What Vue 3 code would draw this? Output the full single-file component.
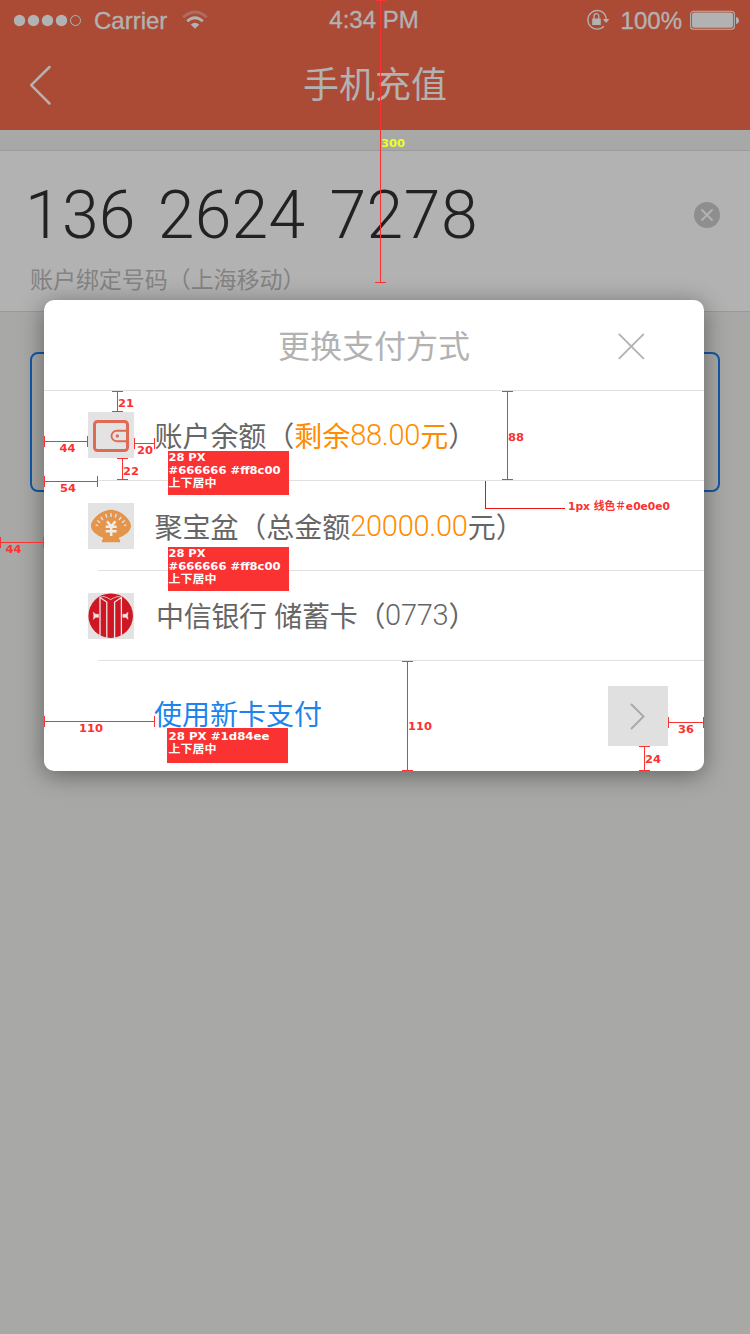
<script setup>
const rows = [
  { id: 'balance', parts: [{ t: '账户余额（' }, { t: '剩余', hot: true }, { t: '88.00', hot: true, num: true }, { t: '元', hot: true }, { t: '）' }] },
  { id: 'fund', parts: [{ t: '聚宝盆（总金额' }, { t: '20000.00', hot: true, num: true }, { t: '元）' }] },
  { id: 'bank', parts: [{ t: '中信银行 储蓄卡（' }, { t: '0773', num: true }, { t: '）' }] },
]

// Horizontal spans: x1, x2, y
const hSpans = [
  [44, 87, 441], [134, 154, 443], [44, 97, 481], [0, 43, 542], [44, 154, 721], [668, 703, 722],
]
// Vertical spans: x, y1, y2
const vSpans = [
  [380, 0, 282], [117, 391, 411], [122, 458, 479], [507, 391, 479], [407, 661, 770], [644, 746, 770],
]
const labels = [
  { x: 381, y: 147, t: '300', w: 24, c: '#e8ff28' },
  { x: 118, y: 407, t: '21', w: 16 },
  { x: 59.5, y: 452, t: '44', w: 16 },
  { x: 137, y: 454, t: '20', w: 16 },
  { x: 123, y: 475, t: '22', w: 16 },
  { x: 60, y: 492, t: '54', w: 16 },
  { x: 5.5, y: 553, t: '44', w: 16 },
  { x: 508, y: 441, t: '88', w: 16 },
  { x: 79, y: 732, t: '110', w: 24 },
  { x: 408, y: 730, t: '110', w: 24 },
  { x: 678, y: 733, t: '36', w: 16 },
  { x: 645, y: 763, t: '24', w: 16 },
]
const notes = [
  { x: 168, y: 451, w: 121, h: 44, lines: [['28 PX', 37, 10], ['#666666 #ff8c00', 112, 23], ['上下居中', 48, 36]] },
  { x: 168, y: 547, w: 121, h: 44, lines: [['28 PX', 37, 10], ['#666666 #ff8c00', 112, 23], ['上下居中', 48, 36]] },
  { x: 167, y: 728, w: 121, h: 35, lines: [['28 PX #1d84ee', 101, 12], ['上下居中', 48, 25]] },
]
</script>

<template>
  <div class="screen">
    <header class="top">
      <div class="status">
        <div class="left">
          <svg class="dots" width="70" height="14" viewBox="0 0 70 14">
            <circle v-for="n in 4" :key="n" :cx="14 * n - 8.5" cy="7.5" r="5.7" fill="#b2b2b2" />
            <circle cx="61.5" cy="7.5" r="5" fill="none" stroke="#b2b2b2" />
          </svg>
          <span class="carrier">Carrier</span>
          <svg class="wifi" width="26" height="20" viewBox="0 0 26 20">
            <path d="M1.2 7.2 Q13-3.2 24.8 7.2" fill="none" stroke="#b2b2b2" stroke-opacity=".35" stroke-width="2.7" />
            <path d="M5.2 11.3 Q13 4.3 20.8 11.3" fill="none" stroke="#b2b2b2" stroke-width="2.8" />
            <path d="M8.7 14.4 Q13 11.2 17.3 14.4 L13 18.7Z" fill="#b2b2b2" />
          </svg>
        </div>
        <span class="clock">4:34 PM</span>
        <div class="right">
          <svg class="lock" width="25" height="22" viewBox="0 0 25 22">
            <path d="M19 5.8 A9.3 9.3 0 1 0 18 17.1 M19 5.8 Q20 8 20.2 10" fill="none" stroke="#b2b2b2" stroke-width="1.3" />
            <path d="M16.8 10 H23.4 L20.1 14Z" fill="#b2b2b2" />
            <rect x="6.2" y="9.5" width="8.6" height="6.5" fill="#b2b2b2" />
            <path d="M8 10 V7.2 a2.4 2.6 0 0 1 4.8 0 V10" fill="none" stroke="#b2b2b2" stroke-width="1.3" />
          </svg>
          <span class="percent">100%</span>
          <svg class="battery" width="50" height="20" viewBox="0 0 50 20">
            <rect x=".6" y="1.2" width="43.8" height="18" rx="3" fill="none" stroke="#b2b2b2" stroke-width="1.1" />
            <rect x="2" y="2.6" width="41" height="15.2" rx="2.2" fill="#b2b2b2" />
            <path d="M46 6.9 Q49 7.6 49 10.4 Q49 13.2 46 13.9Z" fill="#b2b2b2" />
          </svg>
        </div>
      </div>
      <nav class="nav">
        <svg class="back" width="26" height="44" viewBox="0 0 26 44">
          <path d="M22.5 3 L4.2 21.2 L22.5 39.5" fill="none" stroke="#b2b2b2" stroke-width="2.5" stroke-linecap="round" stroke-linejoin="round" />
        </svg>
        <h1>手机充值</h1>
      </nav>
    </header>

    <section class="phone">
      <div class="number"><span>136</span><span>2624</span><span>7278</span></div>
      <div class="owner">账户绑定号码（上海移动）</div>
      <svg class="clear" width="26" height="26" viewBox="0 0 26 26">
        <circle cx="13" cy="13" r="13" fill="#8e8e8e" />
        <path d="M8 8 L18 18 M18 8 L8 18" stroke="#b2b2b2" stroke-width="2" stroke-linecap="round" />
      </svg>
    </section>
    <div class="amount"></div>

    <div class="dialog">
      <div class="dialog-head">
        <h2>更换支付方式</h2>
        <svg class="close" width="28" height="28" viewBox="0 0 28 28">
          <path d="M1.8 1.8 L26.8 26.8 M26.8 1.8 L1.8 26.8" stroke="#b2b2b2" stroke-width="1.9" />
        </svg>
      </div>
      <div v-for="row in rows" :key="row.id" class="row" :class="row.id">
        <svg v-if="row.id === 'balance'" class="icon" width="46" height="46" viewBox="0 0 46 46">
          <rect x="6.5" y="9.5" width="33" height="29" rx="3" fill="none" stroke="#e06b55" stroke-width="3" />
          <path d="M39 18.8 H28.7 a5.2 5.2 0 0 0 0 10.4 H39" fill="none" stroke="#e06b55" stroke-width="1.9" />
          <circle cx="29.3" cy="24" r="1.7" fill="#e06b55" />
        </svg>
        <svg v-else-if="row.id === 'fund'" class="icon" width="46" height="46" viewBox="0 0 46 46">
          <path d="M23 6.7 C32 6.7 43 16 43 23 C43 28 37 32.5 31 34.8 Q30.5 36 32 37 V39.3 H14 V37 Q15.5 36 15 34.8 C9 32.5 3 28 3 23 C3 16 14 6.7 23 6.7Z" fill="#e5954b" />
          <path d="M23 10 V14 M17.7 11 L18.8 14.5 M28.3 11 L27.2 14.5 M12.8 14 L15 17 M33.2 14 L31 17 M9.3 17.5 L12 19.7 M36.7 17.5 L34 19.7 M7.6 21.8 L10 22.6 M38.4 21.8 L36 22.6" stroke="#e3e3e3" stroke-width="1.4" />
          <path d="M19 18.3 L23.2 23.6 L27.4 18.3 M17.7 23.8 H28.7 M17.7 28.3 H28.7 M23.2 23.6 V33" fill="none" stroke="#f0ece6" stroke-width="2.5" />
        </svg>
        <svg v-else class="icon" width="46" height="46" viewBox="0 0 46 46">
          <circle cx="22.7" cy="22.7" r="22.3" fill="#cf1724" />
          <g fill="none" stroke="#ece5e5" stroke-width="1.3">
            <path d="M12 3.5 V42.5 M12 4.5 L18.8 9 V45 M33.4 3.5 V42.5 M33.4 4.5 L26.6 9 V45" />
            <path d="M13 4 Q16 2.4 22.7 6.6 Q29.4 2.4 32.4 4" stroke-width=".8" />
          </g>
          <path d="M5.4 19.3 L7.6 21.3 H10.5 V24.3 H7.6 L5.4 26.3 Q6.4 22.8 5.4 19.3Z M40 19.3 L37.8 21.3 H34.9 V24.3 H37.8 L40 26.3 Q39 22.8 40 19.3Z" fill="#ece5e5" stroke="#ece5e5" stroke-width=".6" />
        </svg>
        <div class="label"><span v-for="(p, i) in row.parts" :key="i" :class="{ hot: p.hot, num: p.num }">{{ p.t }}</span></div>
      </div>
      <div class="row new-card">
        <span class="link">使用新卡支付</span>
        <svg class="go" width="60" height="60" viewBox="0 0 60 60">
          <path d="M23.5 18.5 L35.5 30.5 L23.5 42.5" fill="none" stroke="#a8a8a8" stroke-width="1.9" stroke-linecap="round" />
        </svg>
      </div>
    </div>

    <svg class="specs" width="750" height="1334" viewBox="0 0 750 1334">
      <g stroke="#fa3232" fill="none" shape-rendering="crispEdges">
        <path v-for="([a, b, y], i) in hSpans" :key="'h' + i" :d="`M${a} ${y + .5}H${b + 1}M${a + .5} ${y - 5}v11M${b + .5} ${y - 5}v11`" />
        <path v-for="([x, a, b], i) in vSpans" :key="'v' + i" :d="`M${x + .5} ${a}V${b + 1}M${x - 5} ${a + .5}h11M${x - 5} ${b + .5}h11`" />
        <path d="M485.5 481V508.5H565" stroke="#f01010" />
      </g>
      <text v-for="(l, i) in labels" :key="'l' + i" :x="l.x" :y="l.y" :fill="l.c || '#fa3232'" :textLength="l.w" lengthAdjust="spacingAndGlyphs">{{ l.t }}</text>
      <text x="568" y="510" fill="#fa3232" textLength="102" lengthAdjust="spacingAndGlyphs">1px 线色＃e0e0e0</text>
      <g v-for="(n, i) in notes" :key="'n' + i">
        <rect :x="n.x" :y="n.y" :width="n.w" :height="n.h" fill="#fa3232" />
        <text v-for="(line, j) in n.lines" :key="j" x="168.5" :y="n.y + line[2]" fill="#fff" :textLength="line[1]" lengthAdjust="spacingAndGlyphs">{{ line[0] }}</text>
      </g>
    </svg>
  </div>
</template>

<style>
body { background: #a8a8a6; }
</style>

<style scoped>
.screen {
  position: relative;
  width: 750px;
  height: 1334px;
  overflow: hidden;
  background: #a8a8a6;
  font-family: "Liberation Sans", "Noto Sans CJK SC", sans-serif;
}
.top { height: 130px; background: #ab4b35; color: #b2b2b2; }
.status {
  display: grid;
  grid-template-columns: 1fr auto 1fr;
  height: 40px;
  align-items: center;
  font-size: 24px;
  line-height: 40px;
  -webkit-text-stroke: .35px #b2b2b2;
}
.status svg { display: block; }
.left, .right { display: flex; align-items: center; }
.left { padding-left: 14px; }
.carrier { margin-left: 10px; }
.carrier, .percent { padding-top: 2px; line-height: 38px; }
.clock { margin-right: 2px; }
.wifi { margin-left: 15px; }
.right { justify-content: flex-end; padding-right: 10px; }
.percent { margin: 0 8px 0 10px; }
.nav { display: flex; align-items: center; height: 90px; padding-top: 1px; box-sizing: border-box; }
.back { margin-left: 27px; }
h1, h2 { margin: 0; font-weight: 400; }
h1 { flex: 1; padding-right: 53px; text-align: center; font-size: 36px; line-height: 50px; padding-top: 1px; }
.phone {
  position: relative;
  box-sizing: border-box;
  height: 162px;
  margin-top: 20px;
  padding: 30px 30px 0 25px;
  border-top: 1px solid #9a9a9a;
  border-bottom: 1px solid #9a9a9a;
  background: #b2b2b2;
}
.number {
  display: flex;
  gap: 22px;
  font-family: Roboto, "Liberation Sans", sans-serif;
  font-weight: 300;
  font-size: 66px;
  line-height: 70px;
  letter-spacing: .3px;
  color: #222;
}
.number span:nth-child(2) { margin-right: 2px; }
.number span:last-child { letter-spacing: .6px; }
.owner {
  margin: 12px 0 0 5px;
  font-size: 23px;
  line-height: 34px;
  letter-spacing: -0.05px;
  color: #838383;
}
.clear { position: absolute; right: 30px; top: 51px; }
.amount {
  box-sizing: border-box;
  height: 140px;
  margin: 40px 30px 0;
  border: 2px solid #1558a6;
  border-radius: 8px;
}
.dialog {
  position: absolute;
  left: 44px;
  top: 300px;
  width: 660px;
  height: 471px;
  border-radius: 10px;
  background: #fff;
  box-shadow: 0 4px 24px rgba(0, 0, 0, .42);
}
.dialog-head {
  position: relative;
  display: flex;
  box-sizing: border-box;
  height: 91px;
  padding-top: 4px;
  align-items: center;
  justify-content: center;
  border-bottom: 1px solid #e0e0e0;
}
h2 { font-size: 32px; line-height: 46px; color: #b2b2b2; }
.close { position: absolute; right: 59px; top: 32px; }
.row { position: relative; display: flex; box-sizing: border-box; height: 90px; padding-left: 44px; align-items: center; }
.row:not(.new-card)::after {
  content: "";
  position: absolute;
  left: 54px;
  right: 0;
  bottom: 0;
  height: 1px;
  background: #e0e0e0;
}
.icon { flex: none; background: #e3e3e3; }
.balance .icon { margin-bottom: 2px; }
.label { margin-left: 20.5px; padding-top: 3px; font-size: 28px; line-height: 40px; letter-spacing: -.05px; color: #666; white-space: pre; }
.fund .label { padding-top: 4px; }
.bank .label { margin-left: 22px; letter-spacing: -.3px; }
.num { font-family: Roboto, sans-serif; font-weight: 300; font-size: 29px; letter-spacing: -.25px; position: relative; top: -2px; }
.hot { color: #ff8c00; }
.new-card { height: 110px; padding: 0 36px 0 110px; justify-content: space-between; }
.link { font-size: 28px; line-height: 40px; color: #1d84ee; }
.go { background: #e0e0e0; }
.specs {
  position: absolute;
  left: 0;
  top: 0;
  font: bold 11px "DejaVu Sans", "Noto Sans CJK SC", sans-serif;
}
</style>
